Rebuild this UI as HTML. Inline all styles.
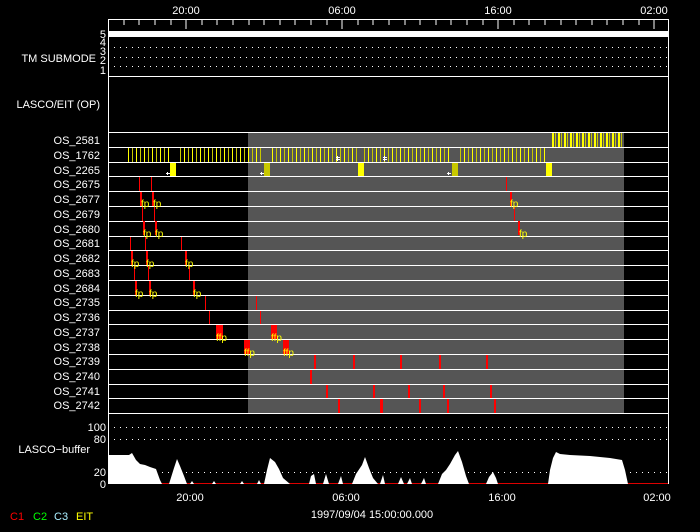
<!DOCTYPE html>
<html><head><meta charset="utf-8"><style>
html,body{margin:0;padding:0;background:#000;width:700px;height:532px;overflow:hidden}
svg{display:block}
text{font-family:"Liberation Sans",sans-serif;fill:#fff;font-size:11px}
.l{text-anchor:end}
.fp{fill:#ff0;font-size:10px}
</style></head><body>
<svg width="700" height="532" viewBox="0 0 700 532" xmlns="http://www.w3.org/2000/svg">
<defs>
<pattern id="st" x="128" y="0" width="8" height="20" patternUnits="userSpaceOnUse">
<rect x="0" y="0" width="1" height="20" fill="#ff0"/><rect x="4" y="0" width="1" height="20" fill="#c8c800"/>
</pattern>
<pattern id="st2" x="552" y="0" width="6" height="20" patternUnits="userSpaceOnUse">
<rect x="0" y="0" width="2" height="20" fill="#ff0"/><rect x="3" y="0" width="1" height="20" fill="#c8c800"/>
</pattern>
<pattern id="dots" x="0" y="0" width="6" height="1" patternUnits="userSpaceOnUse"><rect width="1" height="1" fill="#fff"/></pattern>
</defs>
<text x="186" y="14" text-anchor="middle">20:00</text>
<text x="342" y="14" text-anchor="middle">06:00</text>
<text x="498" y="14" text-anchor="middle">16:00</text>
<text x="654" y="14" text-anchor="middle">02:00</text>
<rect x="248" y="132" width="376" height="281" fill="#555"/>
<rect x="108.5" y="19.5" width="560" height="464" fill="none" stroke="#fff"/>
<g stroke="#fff">
<line x1="108" y1="76.5" x2="669" y2="76.5"/>
<line x1="108" y1="132.5" x2="669" y2="132.5"/>
</g>
<g stroke="#fff">
<path d="M124 20v5M139 20v5M155 20v5M171 20v5M202 20v5M217 20v5M233 20v5M249 20v5M264 20v5M280 20v5M295 20v5M311 20v5M327 20v5M358 20v5M373 20v5M389 20v5M405 20v5M420 20v5M436 20v5M451 20v5M467 20v5M483 20v5M514 20v5M529 20v5M545 20v5M561 20v5M576 20v5M592 20v5M607 20v5M623 20v5M639 20v5M186 20v9M342 20v9M498 20v9M654 20v9"/>
</g>
<rect x="109" y="31" width="559" height="6" fill="#fff"/>
<rect x="109" y="47" width="559" height="1" fill="url(#dots)"/>
<rect x="109" y="57" width="559" height="1" fill="url(#dots)"/>
<rect x="109" y="66" width="559" height="1" fill="url(#dots)"/>
<text x="106" y="38" class="l" font-size="10">5</text>
<text x="106" y="46" class="l" font-size="10">4</text>
<text x="106" y="55" class="l" font-size="10">3</text>
<text x="106" y="64" class="l" font-size="10">2</text>
<text x="106" y="74" class="l" font-size="10">1</text>
<text x="96" y="62" class="l">TM SUBMODE</text>
<text x="100" y="108" class="l">LASCO/EIT (OP)</text>
<g stroke="#fff">
<line x1="108" y1="147.5" x2="669" y2="147.5"/><line x1="108" y1="162.5" x2="669" y2="162.5"/>
<line x1="108" y1="176.5" x2="669" y2="176.5"/><line x1="108" y1="191.5" x2="669" y2="191.5"/>
<line x1="108" y1="206.5" x2="669" y2="206.5"/><line x1="108" y1="221.5" x2="669" y2="221.5"/>
<line x1="108" y1="236.5" x2="669" y2="236.5"/><line x1="108" y1="250.5" x2="669" y2="250.5"/>
<line x1="108" y1="265.5" x2="669" y2="265.5"/><line x1="108" y1="280.5" x2="669" y2="280.5"/>
<line x1="108" y1="295.5" x2="669" y2="295.5"/><line x1="108" y1="310.5" x2="669" y2="310.5"/>
<line x1="108" y1="324.5" x2="669" y2="324.5"/><line x1="108" y1="339.5" x2="669" y2="339.5"/>
<line x1="108" y1="354.5" x2="669" y2="354.5"/><line x1="108" y1="369.5" x2="669" y2="369.5"/>
<line x1="108" y1="384.5" x2="669" y2="384.5"/><line x1="108" y1="398.5" x2="669" y2="398.5"/>
<line x1="108" y1="413.5" x2="669" y2="413.5"/>
</g>
<g>
<text x="100" y="144" class="l">OS_2581</text><text x="100" y="159" class="l">OS_1762</text>
<text x="100" y="174" class="l">OS_2265</text><text x="100" y="188" class="l">OS_2675</text>
<text x="100" y="203" class="l">OS_2677</text><text x="100" y="218" class="l">OS_2679</text>
<text x="100" y="233" class="l">OS_2680</text><text x="100" y="247" class="l">OS_2681</text>
<text x="100" y="262" class="l">OS_2682</text><text x="100" y="277" class="l">OS_2683</text>
<text x="100" y="292" class="l">OS_2684</text><text x="100" y="306" class="l">OS_2735</text>
<text x="100" y="321" class="l">OS_2736</text><text x="100" y="336" class="l">OS_2737</text>
<text x="100" y="351" class="l">OS_2738</text><text x="100" y="365" class="l">OS_2739</text>
<text x="100" y="380" class="l">OS_2740</text><text x="100" y="395" class="l">OS_2741</text>
<text x="100" y="409" class="l">OS_2742</text>
</g>
<rect x="552" y="133" width="72" height="14" fill="url(#st2)"/>
<rect x="128" y="148" width="42" height="14" fill="url(#st)"/>
<rect x="177" y="148" width="87" height="14" fill="url(#st)"/>
<rect x="270" y="148" width="88" height="14" fill="url(#st)"/>
<rect x="364" y="148" width="88" height="14" fill="url(#st)"/>
<rect x="458" y="148" width="87" height="14" fill="url(#st)"/>
<rect x="170" y="163" width="6" height="13" fill="#ff0"/>
<rect x="264" y="163" width="6" height="13" fill="#c8c800"/>
<rect x="358" y="163" width="6" height="13" fill="#ff0"/>
<rect x="452" y="163" width="6" height="13" fill="#c8c800"/>
<rect x="546" y="163" width="6" height="13" fill="#ff0"/>
<g fill="#fff"><rect x="166" y="173" width="4" height="1"/><rect x="167" y="172" width="1" height="3"/>
<rect x="260" y="173" width="4" height="1"/><rect x="261" y="172" width="1" height="3"/>
<rect x="447" y="173" width="4" height="1"/><rect x="448" y="172" width="1" height="3"/>
<rect x="336" y="157" width="4" height="1"/><rect x="336" y="159" width="4" height="1"/><rect x="337" y="156" width="1" height="5"/>
<rect x="383" y="157" width="4" height="1"/><rect x="383" y="159" width="4" height="1"/><rect x="384" y="156" width="1" height="5"/></g>
<g fill="#f00">
<rect x="139" y="177" width="1" height="14"/><rect x="151" y="177" width="1" height="14"/>
<rect x="140" y="192" width="2" height="14"/><rect x="152" y="192" width="2" height="14"/>
<rect x="142" y="207" width="1" height="14"/><rect x="154" y="207" width="1" height="14"/>
<rect x="143" y="221" width="2" height="14"/><rect x="155" y="221" width="2" height="14"/>
<rect x="130" y="237" width="1" height="13"/><rect x="145" y="237" width="1" height="13"/><rect x="181" y="237" width="1" height="13"/>
<rect x="131" y="251" width="2" height="14"/><rect x="146" y="251" width="2" height="14"/><rect x="185" y="251" width="2" height="14"/>
<rect x="134" y="266" width="1" height="14"/><rect x="148" y="266" width="1" height="14"/><rect x="189" y="266" width="1" height="14"/>
<rect x="135" y="281" width="2" height="14"/><rect x="149" y="281" width="2" height="14"/><rect x="193" y="281" width="2" height="14"/>
<rect x="205" y="296" width="1" height="14"/><rect x="256" y="296" width="1" height="14"/>
<rect x="209" y="311" width="1" height="13"/><rect x="260" y="311" width="1" height="13"/>
<rect x="216" y="325" width="7" height="14"/><rect x="271" y="325" width="6" height="14"/>
<rect x="244" y="340" width="6" height="14"/><rect x="283" y="340" width="6" height="14"/>
<rect x="314" y="355" width="2" height="14"/><rect x="353" y="355" width="2" height="14"/><rect x="400" y="355" width="2" height="14"/><rect x="439" y="355" width="2" height="14"/><rect x="486" y="355" width="2" height="14"/>
<rect x="310" y="370" width="2" height="14"/>
<rect x="326" y="385" width="2" height="13"/><rect x="373" y="385" width="2" height="13"/><rect x="408" y="385" width="2" height="13"/><rect x="443" y="385" width="2" height="13"/><rect x="490" y="385" width="2" height="13"/>
<rect x="338" y="399" width="2" height="14"/><rect x="380" y="399" width="3" height="14"/><rect x="419" y="399" width="2" height="14"/><rect x="447" y="399" width="2" height="14"/><rect x="494" y="399" width="2" height="14"/>
<rect x="506" y="177" width="1" height="14"/><rect x="510" y="192" width="2" height="14"/><rect x="514" y="207" width="1" height="14"/><rect x="518" y="221" width="2" height="14"/>
</g>
<g>
<text x="141" y="207" class="fp">fp</text><text x="153" y="207" class="fp">fp</text>
<text x="143" y="237" class="fp">fp</text><text x="155" y="237" class="fp">fp</text>
<text x="131" y="267" class="fp">fp</text><text x="146" y="267" class="fp">fp</text><text x="185" y="267" class="fp">fp</text>
<text x="135" y="297" class="fp">fp</text><text x="149" y="297" class="fp">fp</text><text x="193" y="297" class="fp">fp</text>
<text x="216" y="341" class="fp">ffp</text><text x="271" y="341" class="fp">ffp</text>
<text x="244" y="356" class="fp">ffp</text><text x="283" y="356" class="fp">ffp</text>
<text x="510" y="207" class="fp">fp</text><text x="519" y="237" class="fp">fp</text>
</g>
<rect x="109" y="427" width="559" height="1" fill="url(#dots)"/>
<rect x="109" y="439" width="559" height="1" fill="url(#dots)"/>
<rect x="109" y="472" width="559" height="1" fill="url(#dots)"/>
<text x="106" y="431" class="l">100</text><text x="106" y="443" class="l">80</text>
<text x="90" y="453" class="l">LASCO−buffer</text>
<text x="106" y="476" class="l">20</text><text x="106" y="488" class="l">0</text>
<line x1="109" y1="483.5" x2="668" y2="483.5" stroke="#d00"/>
<path fill="#fff" d="M109 484V455H129L132 453L136 460L140 464L145 465L150 467L156 469L160 480L162 484Z
M169 484L174 468L177 459L180 466L184 476L187 484Z
M264 484L267 470L270 458L275 462L279 469L283 478L290 484Z
M309 484L311 476L314 474L316 484Z M323 484L326 474L329 484Z M338 484L341 476L343 484Z
M352 484L356 474L362 465L365 457L369 468L373 478L378 484Z
M380 484L383 475L385 484Z M398 484L401 477L404 484Z M407 484L410 478L412 484Z
M421 484L424 478L426 484Z M438 484L442 474L446 470L450 464L455 455L458 451L462 462L466 476L469 484Z
M486 484L489 477L493 472L496 478L498 484Z
M548 484L550 470L553 458L556 452L560 454L570 455L590 456L610 458L622 460L625 470L628 484Z
M190 484L192 481L194 484Z M212 484L214 481L216 484Z M240 484L242 481L244 484Z M257 484L259 480L261 484Z"/>
<text x="190" y="501" text-anchor="middle">20:00</text>
<text x="346" y="501" text-anchor="middle">06:00</text>
<text x="502" y="501" text-anchor="middle">16:00</text>
<text x="657" y="501" text-anchor="middle">02:00</text>
<text x="372" y="518" text-anchor="middle" font-size="12">1997/09/04 15:00:00.000</text>
<text x="10" y="520" font-size="10" style="fill:#f00">C1</text>
<text x="33" y="520" font-size="10" style="fill:#0f0">C2</text>
<text x="54" y="520" font-size="10" style="fill:#aef">C3</text>
<text x="76" y="520" font-size="10" style="fill:#ff0">EIT</text>
</svg>
</body></html>
